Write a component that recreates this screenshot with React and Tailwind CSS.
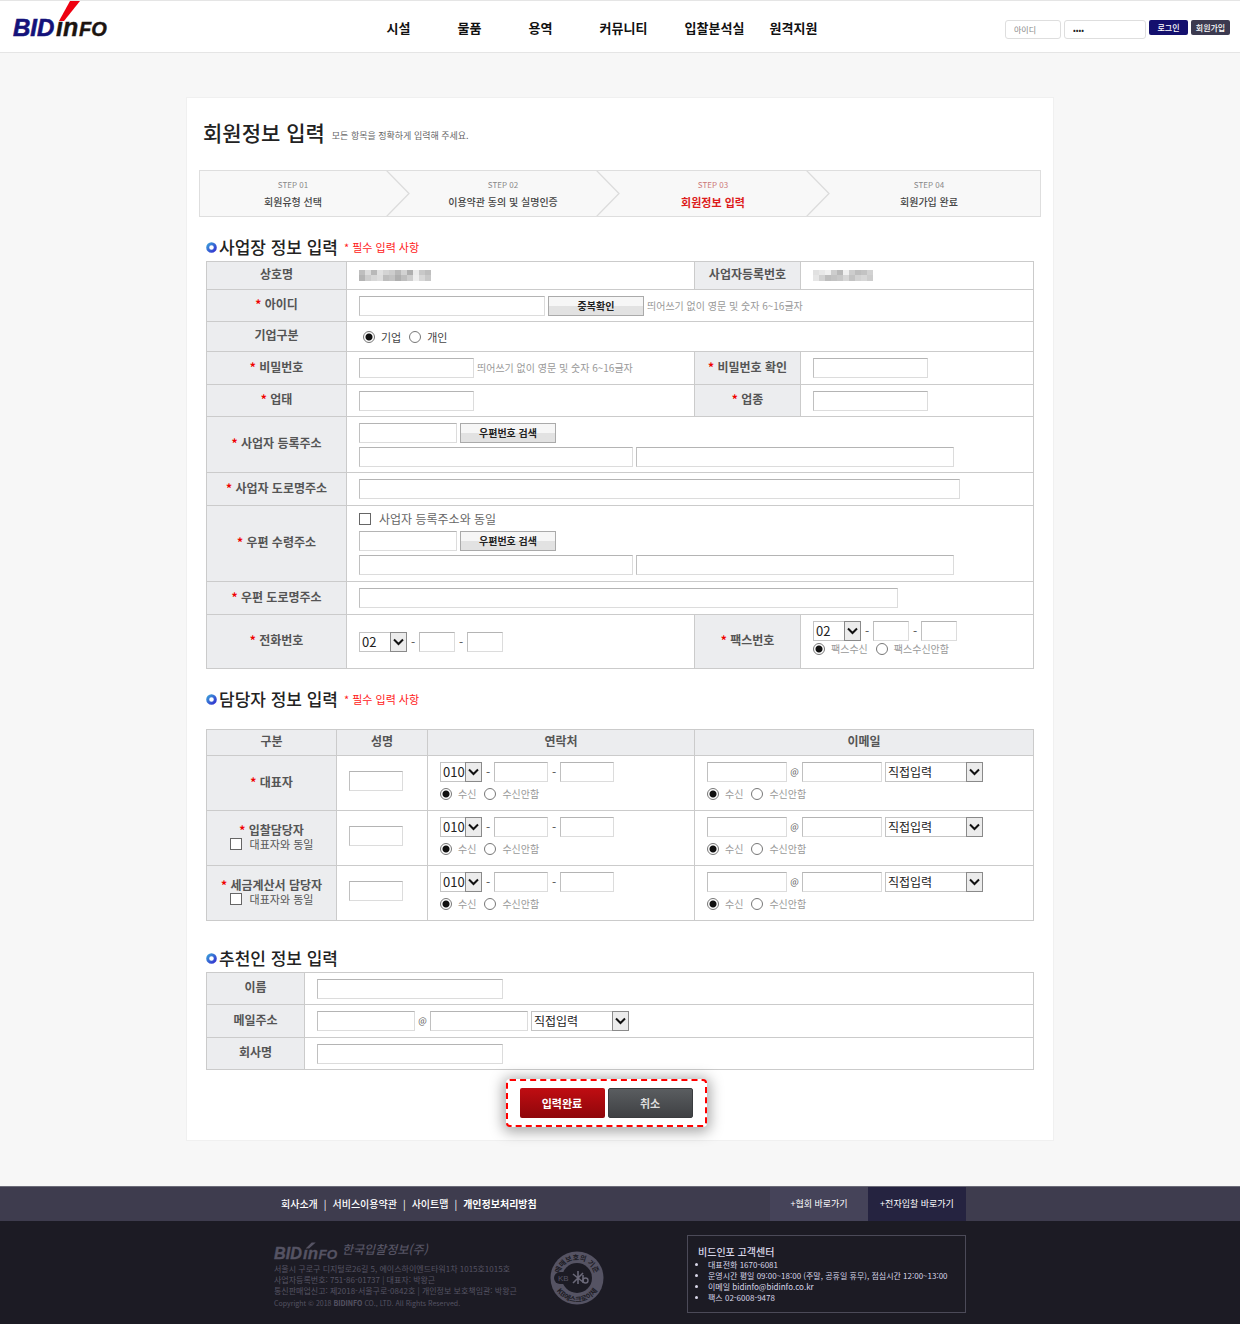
import React from "react";

const field =
  "h-5 border border-t-[#b4b4b4] border-l-[#c0c0c0] border-r-[#dcdcdc] border-b-[#dcdcdc] bg-white px-1 text-xs text-[#222] outline-none";
const th = "border border-[#cbcbcb] bg-[#ecedef] pb-[3px] font-bold text-xs text-[#555] text-center";
const td = "border border-[#cbcbcb] pl-3";

function Text({ label, className = "w-[54px]", type = "text" }) {
  return <input type={type} aria-label={label} className={`${field} ${className}`} />;
}

function Select({ label, options, className, textClass = "text-[13px]" }) {
  return (
    <span className={`relative inline-flex h-5 ${className}`}>
      <select
        aria-label={label}
        className={`h-5 w-full appearance-none border border-[#c4c4c4] bg-white pl-[2px] leading-4 text-[#222] outline-none ${textClass}`}
      >
        {options.map((o) => (
          <option key={o}>{o}</option>
        ))}
      </select>
      <span className="pointer-events-none absolute top-0 right-0 flex h-5 w-[17px] items-center justify-center border border-[#8a8a8a] bg-[#ececec]">
        <svg width="11" height="8" viewBox="0 0 11 8" fill="none" aria-hidden="true">
          <path d="M1 1.5 5.5 6 10 1.5" stroke="#111" strokeWidth="2" />
        </svg>
      </span>
    </span>
  );
}

function Radio({ name, label, checked, className = "text-[10px] text-[#999]" }) {
  return (
    <label className={`inline-flex items-center gap-[6px] leading-3 ${className}`}>
      <input
        type="radio"
        name={name}
        defaultChecked={checked}
        className="size-3 appearance-none rounded-full border border-[#777] bg-white checked:bg-[radial-gradient(circle,#111_0_3px,transparent_4px)]"
      />
      {label}
    </label>
  );
}

function Check({ label, className = "" }) {
  return (
    <label className={`inline-flex items-center gap-2 ${className}`}>
      <input
        type="checkbox"
        className="size-3 appearance-none border border-[#666] bg-white checked:bg-[#444]"
      />
      {label}
    </label>
  );
}

function Req({ children }) {
  return (
    <span>
      <span className="text-[#f00000]">*</span> {children}
    </span>
  );
}

function GrayButton({ children }) {
  return (
    <button
      type="button"
      className="h-5 w-24 border border-[#aaa] bg-gradient-to-b from-[#f6f6f6] from-50% to-[#e2e2e2] to-50% text-[10px] leading-4 font-bold text-[#222]"
    >
      {children}
    </button>
  );
}

function Dash() {
  return <span className="w-3 text-center text-xs leading-4 text-[#555]">-</span>;
}

function At() {
  return <span className="w-[15px] text-center text-[9px] leading-4 text-[#555]">@</span>;
}

function Phone({ label, prefix, selectClass, inputClass }) {
  return (
    <div className="flex items-center">
      <Select label={`${label} 국번`} options={[prefix]} className={selectClass} />
      <Dash />
      <Text label={`${label} 가운데 자리`} className={inputClass} />
      <Dash />
      <Text label={`${label} 끝자리`} className={inputClass} />
    </div>
  );
}

function Email({ label, inputClass }) {
  return (
    <div className="flex items-center">
      <Text label={`${label} 아이디`} className={inputClass} />
      <At />
      <Text label={`${label} 도메인`} className={inputClass} />
      <Select label={`${label} 도메인 선택`} options={["직접입력"]} className="ml-[3px] w-[98px]" textClass="text-xs" />
    </div>
  );
}

function Receive({ name }) {
  return (
    <div className="mt-[6px] flex gap-2">
      <Radio name={name} label="수신" checked />
      <Radio name={name} label="수신안함" />
    </div>
  );
}

function Address({ label }) {
  return (
    <>
      <div className="flex items-center gap-[3px]">
        <Text label={`${label} 우편번호`} className="w-[98px]" />
        <GrayButton>우편번호 검색</GrayButton>
      </div>
      <div className="mt-1 flex items-center gap-[3px]">
        <Text label={`${label} 기본주소`} className="w-[274px]" />
        <Text label={`${label} 상세주소`} className="w-[318px]" />
      </div>
    </>
  );
}

function Mosaic({ shades }) {
  return (
    <svg width={(shades.length / 2) * 6} height="11" aria-hidden="true" shapeRendering="crispEdges">
      {shades.map((s, i) => (
        <rect
          key={i}
          x={Math.floor(i / 2) * 6}
          y={(i % 2) * 5}
          width="6"
          height="6"
          fill={`rgb(${s},${s},${s})`}
        />
      ))}
    </svg>
  );
}

function Heading({ children, required, className = "" }) {
  return (
    <h2 className={`flex h-7 items-center text-[17px] font-medium text-[#222] ${className}`}>
      <svg width="11" height="11" viewBox="0 0 11 11" className="mr-[2px]" aria-hidden="true">
        <defs>
          <linearGradient id="ring" x1="0" y1="0" x2="1" y2="1">
            <stop offset="0" stopColor="#3b9ad8" />
            <stop offset="1" stopColor="#3234d0" />
          </linearGradient>
        </defs>
        <circle cx="5.5" cy="5.5" r="3.8" fill="#fff" stroke="url(#ring)" strokeWidth="3" />
      </svg>
      {children}
      {required && <span className="ml-[6px] text-[11px] font-normal text-[#ff2020]">* 필수 입력 사항</span>}
    </h2>
  );
}

function Logo({ width, height, blue, dark, slash, tall }) {
  return (
    <svg
      width={width}
      height={height}
      viewBox="0 0 98 46"
      className="block overflow-visible"
      role="img"
      aria-label="BIDinfo"
    >
      <polygon points={tall ? "57,0 67,0 51,20 46,20" : "56,11 62,11 52,20 47,20"} fill={slash} />
      <g fontFamily="'Liberation Sans', Arial, sans-serif" fontWeight="700" fontStyle="italic">
        <text x="0" y="35" fontSize="24" fill={blue} stroke={blue} strokeWidth="0.6">BID</text>
        <text x="43" y="35" fontSize="25" fill={dark} stroke={dark} strokeWidth="0.4">ın</text>
        <text x="66" y="35" fontSize="20" fill={dark} stroke={dark} strokeWidth="0.4">FO</text>
      </g>
    </svg>
  );
}

function Seal() {
  return (
    <svg
      width="54"
      height="54"
      viewBox="0 0 54 54"
      className="block overflow-visible"
      role="img"
      aria-label="KB에스크로이체"
    >
      <defs>
        <path id="sealTop" d="M9 27 A18 18 0 0 1 45 27" />
        <path id="sealBottom" d="M3 27 A24 24 0 0 0 51 27" />
      </defs>
      <circle cx="27" cy="27" r="26.5" fill="#555363" />
      <circle cx="27" cy="27" r="15" fill="#1c1b24" />
      <rect x="4" y="21" width="20" height="12" rx="6" fill="#1c1b24" />
      <text x="8" y="30" fontSize="8" fill="#555363" fontFamily="'Liberation Sans', sans-serif">KB</text>
      <path d="M23 23 33 31M23 32 33 22M28 20V33M33 24V32" stroke="#6a6878" strokeWidth="1.6" fill="none" />
      <circle cx="35.5" cy="29.5" r="2.5" stroke="#6a6878" strokeWidth="1.4" fill="none" />
      <g fontSize="7" fontWeight="700" fill="#1c1b24" fontFamily="'Noto Sans CJK KR', sans-serif">
        <text textAnchor="middle">
          <textPath href="#sealTop" startOffset="50%">매매보호의 기준</textPath>
        </text>
        <text textAnchor="middle">
          <textPath href="#sealBottom" startOffset="50%">KB에스크로이체</textPath>
        </text>
      </g>
    </svg>
  );
}

const steps = [
  ["STEP 01", "회원유형 선택"],
  ["STEP 02", "이용약관 동의 및 실명인증"],
  ["STEP 03", "회원정보 입력"],
  ["STEP 04", "회원가입 완료"],
];

function Steps() {
  return (
    <ol className="grid h-[47px] grid-cols-4 border border-[#dedede] bg-[#f8f8f8]">
      {steps.map(([no, name], i) => (
        <li key={no} className={i === 3 ? "flex pr-3" : "flex"}>
          <div className="flex flex-1 flex-col items-center pt-2">
            <span className={`text-[8px] leading-3 ${i === 2 ? "text-[#cc7777]" : "text-[#888]"}`}>{no}</span>
            <span
              className={`mt-[3px] leading-4 ${
                i === 2 ? "text-[11px] font-bold text-[#dd1c1c]" : "text-[10px] font-medium text-[#444]"
              }`}
            >
              {name}
            </span>
          </div>
          {i < 3 && (
            <svg width="24" height="45" viewBox="0 0 24 45" fill="none" aria-hidden="true">
              <path d="M0.5 -0.5 23 22.5 0.5 45.5" stroke="#dcdcdc" strokeWidth="1.3" />
            </svg>
          )}
        </li>
      ))}
    </ol>
  );
}

const people = [
  { name: "대표자", same: false },
  { name: "입찰담당자", same: true },
  { name: "세금계산서 담당자", same: true },
];

const nav = ["시설", "물품", "용역", "커뮤니티", "입찰분석실", "원격지원"];
const links = ["회사소개", "서비스이용약관", "사이트맵", "개인정보처리방침"];

export default function App() {
  return (
    <div
      lang="ko"
      className="min-h-screen bg-[#f7f7f7] font-['Noto_Sans_CJK_KR','Liberation_Sans',sans-serif] text-[#333]"
    >
      <header className="grid h-[53px] grid-cols-[1fr_auto_1fr] border-y border-[#e5e5e5] bg-white">
        <a href="#home" className="pl-[13px]">
          <Logo width={98} height={46} blue="#14127a" dark="#1c1410" slash="#ee0010" tall />
        </a>
        <nav className="flex items-center pt-[3px] pr-9">
          <ul className="grid grid-cols-[repeat(3,71px)_repeat(2,85px)_auto] text-[13px] font-bold text-[#111]">
            {nav.map((n) => (
              <li key={n}>
                <a href="#menu">{n}</a>
              </li>
            ))}
          </ul>
        </nav>
        <form className="flex items-start justify-end gap-[3px] pt-[19px] pr-[10px]">
          <input
            aria-label="아이디"
            placeholder="아이디"
            className="h-[19px] w-14 rounded-[3px] border border-[#dedede] px-2 text-[8px] outline-none placeholder:text-[#888]"
          />
          <input
            type="password"
            aria-label="비밀번호"
            defaultValue="1234"
            className="h-[19px] w-[82px] rounded-[3px] border border-[#dedede] px-2 text-[8px] text-[#222] outline-none"
          />
          <button type="button" className="h-[15px] w-[39px] rounded-[2px] bg-[#14106e] text-[8px] leading-3 font-medium text-white">
            로그인
          </button>
          <button type="button" className="h-[15px] w-[39px] rounded-[2px] bg-[#3c3a50] text-[8px] leading-3 font-medium text-white">
            회원가입
          </button>
        </form>
      </header>

      <main className="mx-auto mt-11 max-w-[868px] border border-[#f0f0f0] bg-white px-3 pt-5 pb-[13px]">
        <div className="mb-6 flex h-7 items-center pl-1">
          <h1 className="text-[21px] leading-6 font-medium text-[#222]">회원정보 입력</h1>
          <p className="mt-2 ml-[7px] text-[9px] leading-4 text-[#666]">모든 항목을 정확하게 입력해 주세요.</p>
        </div>
        <Steps />

        <form className="px-[7px]">
          <Heading required className="mt-4">사업장 정보 입력</Heading>
          <table className="w-full table-fixed border-collapse">
            <colgroup>
              <col className="w-[140px]" />
              <col />
              <col className="w-[106px]" />
              <col className="w-[233px]" />
            </colgroup>
            <tbody>
              <tr className="h-7">
                <th className={th}>상호명</th>
                <td className={td}>
                  <Mosaic shades={[190, 180, 220, 205, 185, 215, 225, 222, 212, 190, 205, 195, 185, 175, 210, 190, 175, 205, 235, 238, 200, 215, 190, 200]} />
                </td>
                <th className={th}>사업자등록번호</th>
                <td className={td}>
                  <Mosaic shades={[225, 230, 232, 210, 240, 190, 205, 195, 185, 200, 240, 215, 205, 195, 190, 210, 195, 215, 210, 205]} />
                </td>
              </tr>
              <tr className="h-8">
                <th className={th}><Req>아이디</Req></th>
                <td className={td} colSpan={3}>
                  <div className="flex items-center gap-[3px]">
                    <Text label="아이디" className="w-[186px]" />
                    <GrayButton>중복확인</GrayButton>
                    <span className="text-[10px] leading-4 text-[#999]">띄어쓰기 없이 영문 및 숫자 6~16글자</span>
                  </div>
                </td>
              </tr>
              <tr className="h-[30px]">
                <th className={th}>기업구분</th>
                <td className={td} colSpan={3}>
                  <div className="flex gap-2 pl-1">
                    <Radio name="kind" label="기업" checked className="text-[11px] text-[#444]" />
                    <Radio name="kind" label="개인" className="text-[11px] text-[#444]" />
                  </div>
                </td>
              </tr>
              <tr className="h-[33px]">
                <th className={th}><Req>비밀번호</Req></th>
                <td className={td}>
                  <div className="flex items-center gap-[3px]">
                    <Text type="password" label="비밀번호" className="w-[115px]" />
                    <span className="text-[10px] leading-4 text-[#999]">띄어쓰기 없이 영문 및 숫자 6~16글자</span>
                  </div>
                </td>
                <th className={th}><Req>비밀번호 확인</Req></th>
                <td className={td}>
                  <div className="flex"><Text type="password" label="비밀번호 확인" className="w-[115px]" /></div>
                </td>
              </tr>
              <tr className="h-8">
                <th className={th}><Req>업태</Req></th>
                <td className={td}>
                  <div className="flex"><Text label="업태" className="w-[115px]" /></div>
                </td>
                <th className={th}><Req>업종</Req></th>
                <td className={td}>
                  <div className="flex"><Text label="업종" className="w-[115px]" /></div>
                </td>
              </tr>
              <tr className="h-14">
                <th className={th}><Req>사업자 등록주소</Req></th>
                <td className={td} colSpan={3}><Address label="사업자 등록주소" /></td>
              </tr>
              <tr className="h-[33px]">
                <th className={th}><Req>사업자 도로명주소</Req></th>
                <td className={td} colSpan={3}>
                  <div className="flex"><Text label="사업자 도로명주소" className="w-[601px]" /></div>
                </td>
              </tr>
              <tr className="h-[75px]">
                <th className={th}><Req>우편 수령주소</Req></th>
                <td className={`${td} pb-[6px]`} colSpan={3}>
                  <Check label="사업자 등록주소와 동일" className="mb-1 flex text-xs leading-4 text-[#666]" />
                  <Address label="우편 수령주소" />
                </td>
              </tr>
              <tr className="h-[33px]">
                <th className={th}><Req>우편 도로명주소</Req></th>
                <td className={td} colSpan={3}>
                  <div className="flex"><Text label="우편 도로명주소" className="w-[539px]" /></div>
                </td>
              </tr>
              <tr className="h-[54px]">
                <th className={th}><Req>전화번호</Req></th>
                <td className={td}>
                  <Phone label="전화번호" prefix="02" selectClass="w-12" inputClass="w-9" />
                </td>
                <th className={th}><Req>팩스번호</Req></th>
                <td className={`${td} pb-2`}>
                  <Phone label="팩스번호" prefix="02" selectClass="w-12" inputClass="w-9" />
                  <div className="mt-[2px] flex gap-2">
                    <Radio name="fax" label="팩스수신" checked />
                    <Radio name="fax" label="팩스수신안함" />
                  </div>
                </td>
              </tr>
            </tbody>
          </table>

          <Heading required className="mt-4 mb-4">담당자 정보 입력</Heading>
          <table className="w-full table-fixed border-collapse">
            <colgroup>
              <col className="w-[130px]" />
              <col className="w-[91px]" />
              <col className="w-[267px]" />
              <col />
            </colgroup>
            <thead>
              <tr className="h-[26px]">
                <th className={th}>구분</th>
                <th className={th}>성명</th>
                <th className={th}>연락처</th>
                <th className={th}>이메일</th>
              </tr>
            </thead>
            <tbody>
              {people.map((p) => (
                <tr key={p.name} className="h-[55px]">
                  <th className={th}>
                    <div className="flex flex-col items-center leading-[14px]">
                      <Req>{p.name}</Req>
                      {p.same && <Check label="대표자와 동일" className="text-[11px] font-normal text-[#555]" />}
                    </div>
                  </th>
                  <td className={`${td} pb-[5px]`}>
                    <div className="flex"><Text label={`${p.name} 성명`} /></div>
                  </td>
                  <td className={`${td} pb-[5px]`}>
                    <Phone label={`${p.name} 연락처`} prefix="010" selectClass="w-[42px]" inputClass="w-[54px]" />
                    <Receive name={`${p.name}-phone`} />
                  </td>
                  <td className={`${td} pb-[5px]`}>
                    <Email label={`${p.name} 이메일`} inputClass="w-20" />
                    <Receive name={`${p.name}-mail`} />
                  </td>
                </tr>
              ))}
            </tbody>
          </table>

          <Heading className="mt-[23px]">추천인 정보 입력</Heading>
          <table className="w-full table-fixed border-collapse">
            <colgroup>
              <col className="w-[98px]" />
              <col />
            </colgroup>
            <tbody>
              <tr className="h-8">
                <th className={th}>이름</th>
                <td className={td}>
                  <div className="flex"><Text label="이름" className="w-[186px]" /></div>
                </td>
              </tr>
              <tr className="h-[33px]">
                <th className={th}>메일주소</th>
                <td className={td}><Email label="추천인 메일주소" inputClass="w-[98px]" /></td>
              </tr>
              <tr className="h-8">
                <th className={th}>회사명</th>
                <td className={td}>
                  <div className="flex"><Text label="회사명" className="w-[186px]" /></div>
                </td>
              </tr>
            </tbody>
          </table>

          <div className="mt-[9px] flex justify-center pr-7">
            <div className="flex gap-[3px] rounded-[4px] border-2 border-dashed border-[#f00] bg-white px-3 py-[7px] shadow-[0_2px_14px_3px_rgba(0,0,0,0.35)]">
              <button
                type="submit"
                className="h-[30px] w-[85px] rounded-[2px] bg-gradient-to-b from-[#c00d12] to-[#8f070b] text-[11px] leading-4 font-bold text-white"
              >
                입력완료
              </button>
              <button
                type="button"
                className="h-[30px] w-[85px] rounded-[2px] border border-[#3a3c3f] bg-gradient-to-b from-[#5a5d60] to-[#3f4144] text-[11px] leading-4 font-bold text-[#ddd]"
              >
                취소
              </button>
            </div>
          </div>
        </form>
      </main>

      <footer className="mt-[45px] bg-[#1c1b24]">
        <div className="border-t border-[#6c6b78] bg-[#3e3c4e]">
          <div className="mx-auto flex h-[34px] max-w-[692px] items-stretch">
            <ul className="flex items-center pl-[7px] text-[10px] leading-4 font-medium text-white">
              {links.map((l, i) => (
                <li key={l} className={i === 3 ? "font-bold" : ""}>
                  {i > 0 && <span className="mx-[6px] font-normal">|</span>}
                  <a href="#info">{l}</a>
                </li>
              ))}
            </ul>
            <a href="#assoc" className="ml-auto flex w-[98px] items-center justify-center bg-[#454359] text-[9px] text-white">
              +협회 바로가기
            </a>
            <a href="#bid" className="flex w-[98px] items-center justify-center bg-[#252340] text-[9px] text-white">
              +전자입찰 바로가기
            </a>
          </div>
        </div>
        <div className="mx-auto flex max-w-[692px] pt-[14px] pb-3">
          <div className="w-[276px] text-[8px] leading-[11px] whitespace-nowrap text-[#555363]">
            <div className="flex h-6 items-start">
              <Logo width={66} height={31} blue="#555363" dark="#555363" slash="#555363" />
              <span className="mt-1 ml-[2px] text-xs leading-5 font-medium italic">한국입찰정보(주)</span>
            </div>
            <p className="mt-1">서울시 구로구 디지털로26길 5, 에이스하이엔드타워1차 1015호1015호</p>
            <p>사업자등록번호: 751-86-01737 | 대표자: 박왕근</p>
            <p>통신판매업신고: 제2018-서울구로-0842호 | 개인정보 보호책임관: 박왕근</p>
            <p className="mt-[2px] text-[7px]">
              Copyright © 2018 <b>BIDINFO</b> CO., LTD. All Rights Reserved.
            </p>
          </div>
          <div className="pt-4">
            <Seal />
          </div>
          <section className="ml-auto h-[78px] w-[279px] border border-[#4b4a58] pt-[9px] pl-[10px] whitespace-nowrap text-[#d8d6e8]">
            <h3 className="text-[10px] leading-[14px] font-medium">비드인포 고객센터</h3>
            <ul className="list-disc pl-[10px] text-[8px] leading-[11px]">
              <li>대표전화 1670-6081</li>
              <li>운영시간 평일 09:00~18:00 (주말, 공휴일 휴무), 점심시간 12:00~13:00</li>
              <li>이메일 bidinfo@bidinfo.co.kr</li>
              <li>팩스 02-6008-9478</li>
            </ul>
          </section>
        </div>
      </footer>
    </div>
  );
}
